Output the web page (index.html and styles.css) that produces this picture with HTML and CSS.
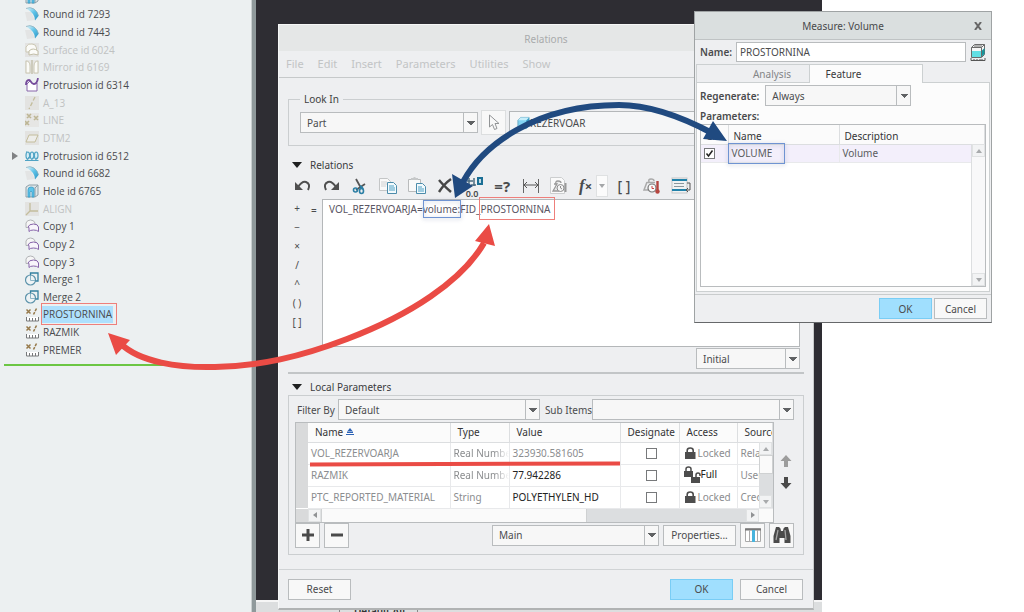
FILE: index.html
```html
<!DOCTYPE html>
<html lang="en">
<head>
<meta charset="utf-8">
<title>Relations</title>
<link rel="stylesheet" href="styles.css">
</head>
<body>
<svg class="sprite" aria-hidden="true">
  <defs>
    <linearGradient id="sky" x1="0" y1="0" x2="1" y2="1"><stop offset="0" stop-color="#e8f7fc"/><stop offset=".5" stop-color="#5fc3e8"/><stop offset="1" stop-color="#2a94c4"/></linearGradient>
  </defs>
  <symbol id="i-round" viewBox="0 0 14 14"><path d="M0 5h6l4 8-8 1z" fill="#e3e4e4"/><path d="M1 1.500Q5-.5 9 2q4 3 4.500 7L10 13.500Q10 6 1 1.500z" fill="url(#sky)"/><path d="M1 1.500Q5-.5 9 2q4 3 4.500 7" fill="none" stroke="#8fb0bd" stroke-width=".8"/></symbol>
  <symbol id="i-surface" viewBox="0 0 14 14"><rect width="14" height="14" fill="#e3e3e2"/><path d="M1 9V4Q3 0 7 1q4 0 4.500 4v3M1 9h4" fill="#fbfbf8" stroke="#cbc8b4"/><path d="M4 12V8q4-4 9 0v4q-4-2-9 0z" fill="#fbfbf8" stroke="#c3bfa8"/></symbol>
  <symbol id="i-mirror" viewBox="0 0 14 14"><rect width="14" height="14" fill="#e6e6e4"/><path d="M1 1q4 0 4 5v7H1zM13 1q-4 0-4 5v7h4z" fill="#fbfbf8" stroke="#c9c6b2"/><path d="M7 0v14" stroke="#bdb9a2" stroke-width="1.200"/></symbol>
  <symbol id="i-sweep" viewBox="0 0 14 14"><path d="M2 6v7h10V5l-4 1-3-3z" fill="#fff" stroke="#8764aa"/><path d="M1 7Q1 2 4 2c2 0 2 4 5 4q3 0 4-6" fill="none" stroke="#754b9b" stroke-width="1.800"/></symbol>
  <symbol id="i-axis" viewBox="0 0 14 14"><rect width="14" height="14" fill="#e3e3e1"/><path d="M10 1L4 13" stroke="#c3bd9c" stroke-width="1.300" stroke-dasharray="4 2"/></symbol>
  <symbol id="i-points" viewBox="0 0 14 14"><rect width="14" height="14" fill="#e6e6e4"/><path d="M2 1l4 4m0-4L2 5m7-2l4 4m0-4L9 7M0 8l4 4m0-4l-4 4" stroke="#bdb695" stroke-width="1.600"/></symbol>
  <symbol id="i-plane" viewBox="0 0 14 14"><rect width="14" height="14" fill="#e3e3e1"/><path d="M4 4h9l-3 7H1z" fill="#ededea" stroke="#c3bd9c"/></symbol>
  <symbol id="i-pattern" viewBox="0 0 14 14"><path d="M0 11.500h13.500M1 3h1" stroke="#4fa3c4" fill="none"/><g fill="#d8eef6" stroke="#4fa3c4" stroke-width="1.200"><ellipse cx="2.800" cy="6.500" rx="1.800" ry="3.500"/><ellipse cx="7" cy="6.500" rx="1.800" ry="3.500"/><ellipse cx="11.200" cy="6.500" rx="1.800" ry="3.500"/></g><path d="M2 11l2-3m2.500 3l2-3m2 3l2-3" stroke="#4fa3c4"/></symbol>
  <symbol id="i-hole" viewBox="0 0 14 14"><path d="M1 3l3-2h9v10l-3 2H1z" fill="#dfe6e9" stroke="#8fa0a8"/><path d="M10 3.500V13M10 4l3-3" stroke="#8fa0a8"/><path d="M3 13V6q0-3 3-3t3 2v8H7V8q-1-2-2 0v5z" fill="#5cc4ea" stroke="#3b9cc5" stroke-width=".8"/></symbol>
  <symbol id="i-csys" viewBox="0 0 14 14"><rect width="14" height="14" fill="#e3e3e1"/><path d="M5 1v8h8M5 9l-4 4" fill="none" stroke="#c3bd9c" stroke-width="1.300"/></symbol>
  <symbol id="i-copy" viewBox="0 0 14 14"><path d="M1 8.500V4Q2 1 5.500 1T10 4v1M1 8.500h2" fill="#f6f6f6" stroke="#b2b4b6"/><path d="M4 12.500V8.500L3 8q1-3 5.500-3t5 3v4.500q-1.500-1.500-5-1.500T4 12.500z" fill="#f8f5fb" stroke="#8764aa"/></symbol>
  <symbol id="i-merge" viewBox="0 0 14 14"><circle cx="5.500" cy="8" r="5" fill="#eef3f5" stroke="#5d93ab" stroke-width="1.200"/><path d="M5.500 3.500V1H13v8h-2.500" fill="none" stroke="#3480a0" stroke-width="1.300"/><path d="M5.500 4v4.500H10" fill="none" stroke="#8db5c6"/></symbol>
  <symbol id="i-measure" viewBox="0 0 14 14"><path d="M1.500 1.500l4 4m0-4l-4 4" stroke="#96794a" stroke-width="1.500"/><path d="M11.500.500l-3 6" stroke="#96794a" stroke-width="1.500" stroke-dasharray="3 1"/><path d="M1.500 9v4h12V9" fill="#fff" stroke="#77797b"/><path d="M4.500 13v-3m3 3v-3m3 3v-3" stroke="#77797b"/></symbol>
  <symbol id="i-lock" viewBox="0 0 12 12"><rect x="1" y="5" width="10.500" height="7" fill="#4d4d4d"/><path d="M3.200 6V3.500q0-2.500 3-2.500t3 2.500V6" fill="none" stroke="#4d4d4d" stroke-width="1.600"/></symbol>
  <symbol id="i-binoc" viewBox="0 0 18 18"><path d="M3 1h3q2 1 2 4h2q0-3 2-4h3l2.500 9v7h-6v-5h-5v5h-6v-7z" fill="#4b4b4b"/><path d="M5 4L3 14M12 4l1 10" stroke="#a5a5a5" stroke-width="1.300"/></symbol>
</svg>

<div class="app">
  <nav class="tree" aria-label="Model tree">
    <ul class="tree-list">
      <li class="node"><svg class="ic"><use href="#i-hole"/></svg></li>
      <li class="node"><svg class="ic"><use href="#i-round"/></svg>Round id 7293</li>
      <li class="node"><svg class="ic"><use href="#i-round"/></svg>Round id 7443</li>
      <li class="node off"><svg class="ic"><use href="#i-surface"/></svg>Surface id 6024</li>
      <li class="node off"><svg class="ic"><use href="#i-mirror"/></svg>Mirror id 6169</li>
      <li class="node"><svg class="ic"><use href="#i-sweep"/></svg>Protrusion id 6314</li>
      <li class="node off"><svg class="ic"><use href="#i-axis"/></svg>A_13</li>
      <li class="node off"><svg class="ic"><use href="#i-points"/></svg>LINE</li>
      <li class="node off"><svg class="ic"><use href="#i-plane"/></svg>DTM2</li>
      <li class="node parent"><svg class="ic"><use href="#i-pattern"/></svg>Protrusion id 6512</li>
      <li class="node"><svg class="ic"><use href="#i-round"/></svg>Round id 6682</li>
      <li class="node"><svg class="ic"><use href="#i-hole"/></svg>Hole id 6765</li>
      <li class="node off"><svg class="ic"><use href="#i-csys"/></svg>ALIGN</li>
      <li class="node"><svg class="ic"><use href="#i-copy"/></svg>Copy 1</li>
      <li class="node"><svg class="ic"><use href="#i-copy"/></svg>Copy 2</li>
      <li class="node"><svg class="ic"><use href="#i-copy"/></svg>Copy 3</li>
      <li class="node"><svg class="ic"><use href="#i-merge"/></svg>Merge 1</li>
      <li class="node"><svg class="ic"><use href="#i-merge"/></svg>Merge 2</li>
      <li class="node"><svg class="ic"><use href="#i-measure"/></svg><span class="picked">PROSTORNINA</span></li>
      <li class="node"><svg class="ic"><use href="#i-measure"/></svg>RAZMIK</li>
      <li class="node"><svg class="ic"><use href="#i-measure"/></svg>PREMER</li>
    </ul>
    <div class="insert-line"></div>
  </nav>

  <main class="canvas">
    <div class="viewport"></div>
    <div class="status"><span class="status-tools"></span><span class="status-tab">Default All</span></div>
  </main>
</div>

<section class="window relations" aria-label="Relations">
  <header class="title title-off">Relations</header>
  <div class="menubar">
    <button class="menu">File</button><button class="menu">Edit</button><button class="menu">Insert</button><button class="menu">Parameters</button><button class="menu">Utilities</button><button class="menu">Show</button>
  </div>
  <div class="body">
    <fieldset class="lookin">
      <legend>Look In</legend>
      <div class="lookin-row">
        <span class="select s-part"><select aria-label="Look in"><option>Part</option></select></span>
        <button class="pick" aria-label="Select"><svg width="12" height="17" viewBox="0 0 12 17"><path d="M1.500 1v12l3-2.500 2 5 2.500-1-2-5h4z" fill="#f8f8f8" stroke="#929496"/></svg></button>
        <label class="model"><svg width="13" height="14" viewBox="0 0 14 14"><path d="M1 4l3-3h9v9l-3 3H1z" fill="#82d3f2" stroke="#68a9c2"/><path d="M10 4v9l3-3V1z" fill="#369dc6"/><path d="M1 4l3-3h9l-3 3z" fill="#c5eefb"/></svg><input type="text" value="REZERVOAR" aria-label="Model"></label>
      </div>
    </fieldset>

    <h2 class="section">Relations</h2>
    <div class="toolbar">
      <button aria-label="Undo"><svg width="18" height="14" viewBox="0 0 18 14"><path d="M4 8Q8 2 12 3q5 2 2 8" fill="none" stroke="#4f4f4f" stroke-width="2"/><path d="M1 3v8h8z" fill="#4f4f4f"/></svg></button>
      <button aria-label="Redo"><svg width="18" height="14" viewBox="0 0 18 14"><path d="M14 8Q10 2 6 3q-5 2-2 8" fill="none" stroke="#4f4f4f" stroke-width="2"/><path d="M17 3v8H9z" fill="#4f4f4f"/></svg></button>
      <button aria-label="Cut"><svg width="16" height="18" viewBox="0 0 16 18"><path d="M4 2l5 9M13 7l-9 6" stroke="#555" stroke-width="1.800"/><path d="M8 9q2 1 3 3" stroke="#2c7fa5" stroke-width="2"/><circle cx="3.500" cy="13" r="2" fill="none" stroke="#2c7fa5" stroke-width="1.600"/><ellipse cx="9.500" cy="14" rx="2" ry="2.500" fill="none" stroke="#2c7fa5" stroke-width="1.600"/></svg></button>
      <button aria-label="Copy"><svg width="20" height="20" viewBox="0 0 20 20"><path d="M1.500 2.500h8l3 3v9h-11z" fill="#f9f9f9" stroke="#c4c6c7"/><path d="M3 6h6M3 8h6M3 10h5" stroke="#d0d2d3"/><path d="M9.500 6.500h6l3 3v8h-9z" fill="#f2fafd" stroke="#4c8cab"/><path d="M11 10h5M11 12h6M11 14h6" stroke="#4c9fc4"/></svg></button>
      <button aria-label="Paste"><svg width="20" height="20" viewBox="0 0 20 20"><path d="M1.500 3.500h12v12h-12z" fill="#f9f9f9" stroke="#b9bbbc"/><path d="M4 4V2h2q1.500-2 3 0h2v2z" fill="#c6c8c9"/><path d="M9.500 7.500h6l3 3v7h-9z" fill="#f2fafd" stroke="#4c8cab"/><path d="M11 11h4M11 13h6M11 15h6" stroke="#4c9fc4"/></svg></button>
      <button aria-label="Delete"><svg width="16" height="16" viewBox="0 0 16 16"><path d="M2 2q4 5 12 12M14 1Q7 6 2 14" fill="none" stroke="#474747" stroke-width="2.400"/></svg></button>
      <button aria-label="Units" class="units"><svg width="20" height="20" viewBox="0 0 20 20"><path d="M3 5h6M5 2v8M10 2v8M7 9h5" stroke="#4b6c80" stroke-width="1.500"/><rect x="13" y="1" width="6" height="8" fill="#1b6f95"/><path d="M16 3v4" stroke="#fff" stroke-width="1.500"/></svg><span>0.0</span></button>
      <button aria-label="Evaluate" class="glyph">=?</button>
      <button aria-label="Dimension"><svg width="18" height="14" viewBox="0 0 18 14"><path d="M1.500 0v14M16.500 0v14" stroke="#666"/><path d="M2 6h14M5 3L2 6l3 3M13 3l3 3-3 3" fill="none" stroke="#555"/></svg></button>
      <button aria-label="Mass"><svg width="20" height="20" viewBox="0 0 20 20"><path d="M1.500 1.500h11l3 3v13h-14z" fill="#fafafa" stroke="#cccecf"/><path d="M7 8q-1-3 2-3t3 2M5 8h3L4 15h6" fill="#e9eaea" stroke="#999" stroke-width="1.300"/><circle cx="11.500" cy="12" r="3.500" fill="#f5f5f5" stroke="#8c8c8c"/><path d="M11.500 10v2l1.500 1" fill="none" stroke="#8c8c8c"/><path d="M16.500 7v9" stroke="#999" stroke-width="2"/></svg></button>
      <span class="fx"><button aria-label="Function"><i>f</i><b>×</b></button><button class="drop" aria-label="Functions"></button></span>
      <button aria-label="Brackets" class="glyph brackets">[ ]</button>
      <button aria-label="Thermal"><svg width="20" height="20" viewBox="0 0 20 20"><path d="M7 6q-1-3 2-3t3 2M5 6.500h8M5 6l-3 8h5" fill="none" stroke="#aaa" stroke-width="1.500"/><circle cx="10" cy="12" r="4" fill="#fafafa" stroke="#777" stroke-width="1.200"/><path d="M10 10v2.500h2" fill="none" stroke="#c44" /><path d="M15.500 5v11" stroke="#b5453f" stroke-width="2.400"/><circle cx="15.500" cy="15.500" r="2.200" fill="#b5453f"/></svg></button>
      <button aria-label="Sort"><svg width="20" height="18" viewBox="0 0 20 18"><rect x="1" y="1" width="15" height="15" fill="#f0f2f3" stroke="#c4c6c7"/><path d="M1 3h15M1 13h15" stroke="#2182aa" stroke-width="2"/><path d="M3 6.500h10M3 9.500h10" stroke="#8a979d"/><path d="M16 6h3v7h-3M17 11l-2 2 2 2" fill="none" stroke="#555"/></svg></button>
    </div>

    <div class="editor">
      <div class="ops"><button>+</button><button>−</button><button>×</button><button>/</button><button>^</button><button>( )</button><button>[ ]</button></div>
      <span class="eq">=</span>
      <textarea aria-label="Relations text" spellcheck="false">VOL_REZERVOARJA=volume:FID_PROSTORNINA</textarea>
    </div>
    <div class="initial-row"><span class="select s-initial"><select aria-label="Stage"><option>Initial</option></select></span></div>
    <hr class="rule">

    <h2 class="section">Local Parameters</h2>
    <div class="params">
      <div class="filter">
        <label for="filter">Filter By</label><span class="select"><select id="filter"><option>Default</option></select></span>
        <label for="sub" class="sub">Sub Items</label><span class="select"><select id="sub"><option></option></select></span>
      </div>
      <div class="grid-row">
        <div class="grid">
          <table class="ptable">
            <colgroup><col class="c-h"><col class="c-name"><col class="c-type"><col class="c-value"><col class="c-des"><col class="c-acc"><col></colgroup>
            <thead><tr><th class="rowhead"></th><th>Name <svg width="8" height="8" viewBox="0 0 8 8"><path d="M4 0l2.500 3H1.500zM1 3.500h6V5H1zM0 6h8v1H0z" fill="#2c62b5"/></svg></th><th>Type</th><th>Value</th><th>Designate</th><th>Access</th><th>Source</th></tr></thead>
            <tbody>
              <tr><td class="rowhead"></td><td>VOL_REZERVOARJA</td><td class="fade">Real Number</td><td>323930.581605</td><td class="mid"><input type="checkbox" aria-label="Designate VOL_REZERVOARJA"></td><td class="acc"><svg width="12" height="12"><use href="#i-lock"/></svg>Locked</td><td>Relation</td></tr>
              <tr><td class="rowhead"></td><td>RAZMIK</td><td class="fade">Real Number</td><td class="dark">77.942286</td><td class="mid"><input type="checkbox" aria-label="Designate RAZMIK"></td><td class="acc both dark"><svg width="18" height="18" viewBox="0 0 18 18"><path d="M1 5h9v6H1zM8 11h9v6H8z" fill="#4d4d4d"/><path d="M3 5V3q0-2 2.500-2T8 3v2M13 11V9q0-2 2-2t2 2v1" fill="none" stroke="#4d4d4d" stroke-width="1.500"/></svg>Full</td><td>User-D</td></tr>
              <tr><td class="rowhead"></td><td>PTC_REPORTED_MATERIAL</td><td>String</td><td class="dark">POLYETHYLEN_HD</td><td class="mid"><input type="checkbox" aria-label="Designate PTC_REPORTED_MATERIAL"></td><td class="acc"><svg width="12" height="12"><use href="#i-lock"/></svg>Locked</td><td>Creo P</td></tr>
            </tbody>
          </table>
          <div class="vbar"><span class="bt up"></span><span class="thumb"></span><span class="bt down"></span></div>
          <div class="hbar"><span class="corner"></span><span class="bt left"></span><span class="thumb"></span><span class="track"></span><span class="bt right"></span><span class="end"></span></div>
        </div>
        <div class="movers">
          <button aria-label="Move up"><svg width="12" height="13" viewBox="0 0 12 13"><path d="M6 0l5.500 6H8v6H4V6H.5z" fill="#9c9c9c"/></svg></button>
          <button aria-label="Move down"><svg width="12" height="13" viewBox="0 0 12 13"><path d="M6 12L.5 6H4V0h4v6h3.500z" fill="#4a4a4a"/></svg></button>
        </div>
      </div>
      <div class="actions">
        <button class="btn sq" aria-label="Add"><svg width="14" height="14" viewBox="0 0 14 14"><path d="M7 1v12M1 7h12" stroke="#4a4a4a" stroke-width="3"/></svg></button>
        <button class="btn sq" aria-label="Remove"><svg width="14" height="14" viewBox="0 0 14 14"><path d="M1 7h12" stroke="#4a4a4a" stroke-width="3"/></svg></button>
        <span class="select s-main"><select aria-label="Parameter set"><option>Main</option></select></span>
        <button class="btn props">Properties...</button>
        <button class="btn sq" aria-label="Columns"><svg width="16" height="14" viewBox="0 0 16 14"><path d="M.5.500h15v13H.5z" fill="#fff" stroke="#aaa"/><path d="M0 1.500h16" stroke="#777" stroke-width="2"/><path d="M4.500 2v12M12.500 2v12" stroke="#aaa"/><path d="M7 2h3v12H7z" fill="#48b4dd"/></svg></button>
        <button class="btn sq" aria-label="Find"><svg width="18" height="18"><use href="#i-binoc"/></svg></button>
      </div>
    </div>
  </div>
  <footer class="foot"><button class="btn">Reset</button><button class="btn ok push">OK</button><button class="btn">Cancel</button></footer>
</section>

<section class="window measure" aria-label="Measure: Volume">
  <header class="title"><span>Measure: Volume</span><button class="close" aria-label="Close"><svg width="8" height="8" viewBox="0 0 8 8"><path d="M1 0l6 8M7 0L1 8" stroke="#666" stroke-width="2"/></svg></button></header>
  <div class="name-row"><label for="mname">Name:</label><input id="mname" type="text" value="PROSTORNINA"><svg width="16" height="18" viewBox="0 0 16 18"><path d="M1.500 4.500l3-3h10v10l-3 3h-10z" fill="#f7f7f7" stroke="#6b6b6b"/><path d="M2 8h9v6H2z" fill="#62dfe4"/><path d="M11.500 8v6l3-3V5z" fill="#17969d"/><path d="M1.500 4.500h10l3-3M11.500 4.500V14M4 3h8" fill="none" stroke="#6b6b6b"/><path d="M1 15v2.500h14V15M4 17v-1m3 1v-1m3 1v-1m2 1v-1" fill="none" stroke="#555"/></svg></div>
  <div class="tabs" role="tablist"><button role="tab" class="tab">Analysis</button><button role="tab" class="tab on">Feature</button><span class="tab-rest"></span></div>
  <div class="mpanel">
    <div class="regen"><label for="regen">Regenerate:</label><span class="select s-regen"><select id="regen"><option>Always</option></select></span></div>
    <div class="plabel">Parameters:</div>
    <div class="mgrid">
      <table class="mtable">
        <colgroup><col class="m-sh"><col class="m-name"><col></colgroup>
        <thead><tr><th>Cr...</th><th>Name</th><th>Description</th></tr></thead>
        <tbody><tr><td><input type="checkbox" class="checked" checked aria-label="Create VOLUME"></td><td>VOLUME</td><td>Volume</td></tr></tbody>
      </table>
      <div class="mbar"><span class="bt up"></span><span class="track"></span><span class="bt down"></span></div>
    </div>
  </div>
  <footer class="mfoot"><button class="btn ok">OK</button><button class="btn">Cancel</button></footer>
</section>

<svg class="marks" width="1024" height="612" viewBox="0 0 1024 612" aria-hidden="true">
  <g fill="none" stroke="#ee7f7b"><rect x="41.500" y="303.500" width="75" height="21"/><rect x="479.500" y="197.500" width="75" height="22"/></g>
  <g fill="none" stroke="#6f93d2" class="glow"><rect x="423.500" y="200.500" width="37" height="17"/><rect x="728.500" y="143.500" width="56" height="20"/></g>
  <path d="M310 464.500L620 463.500" stroke="#ea4b45" stroke-width="4"/>
  <path d="M121 344C140 362 178 368 215 367C260 366 300 357 347 339C410 315 462 281 484 243" fill="none" stroke="#ea4b45" stroke-width="6"/>
  <path d="M108 333l22 7-14 15zM489 224l6 22-20-5z" fill="#ea4b45"/>
  <path d="M463 182C482 146 535 105 619 105C650 105 680 116 712 133" fill="none" stroke="#204a80" stroke-width="6"/>
  <path d="M455 198l-3-24 21 12zM727 141l-14-20-10 18z" fill="#204a80"/>
</svg>
</body>
</html>
```
FILE: styles.css
```css
* { box-sizing: border-box; }
body {
  margin: 0;
  position: relative;
  min-height: 100vh;
  overflow: hidden;
  background: #fff;
  color: #4a4b4d;
  font: 10px/14px "Noto Sans", "Open Sans", sans-serif;
}
button, input, select, textarea { font: inherit; color: inherit; margin: 0; padding: 0; border: 0; background: none; border-radius: 0; outline: 0; }
button { text-align: center; }
.sprite { position: absolute; width: 0; height: 0; }
svg { flex: none; }

.app { display: flex; height: 100vh; min-height: 612px; }

/* model tree */
.tree { flex: 0 0 256px; background: #ecf0f1; border-right: 4px solid #8f999b; box-shadow: inset -1px 0 #c9cfd0; overflow: hidden; font-family: "Open Sans", "Noto Sans", sans-serif; }
.tree-list { list-style: none; margin: -12px 0 0; padding: 0; height: 371px; display: grid; grid-auto-rows: 1fr; }
.node { display: flex; align-items: center; gap: 4px; padding-left: 25px; }
.node .ic { width: 14px; height: 14px; }
.node.off { color: #c0c2c2; }
.node.parent { padding-left: 12px; }
.node.parent::before { content: ""; width: 0; height: 0; margin-right: 3px; border: 4px solid transparent; border-left: 6px solid #808284; border-right: 0; }
.picked { background: #aee0fd; margin-left: -1px; padding: 1px 1px 2px 1px; }
.insert-line { height: 2px; margin: 5px 0 0 4px; background: #6cc644; }

/* graphics area */
.canvas { display: flex; flex-direction: column; width: 566px; }
.viewport { flex: 1; background: #2e2d33; }
.status { flex: 0 0 12px; display: flex; gap: 8px; background: #dcdedf; border-top: 2px solid #f6f6f6; overflow: hidden; padding-left: 4px; }
.status-tools { width: 80px; border-right: 1px solid #888; }
.status-tab { padding: 2px 12px 0 6px; border-right: 1px solid #888; font-weight: 600; color: #333; }

/* floating windows */
.window { position: absolute; background: #eeeff1; display: flex; flex-direction: column; }
.relations { left: 278px; top: 24px; width: 536px; border: 1px solid #f6f7f7; border-right-color: #c8caca; border-bottom: 2px solid #b0b2b3; }
.measure { left: 694px; top: 11px; width: 298px; border: 1px solid #9fa3a4; border-bottom-color: #66686a; }
.title { display: flex; align-items: center; justify-content: center; height: 26px; position: relative; background: #dadfdf; color: #48494b; }
.title-off { background: #e5e7e7; color: #a9abac; padding-top: 2px; }
.measure .title { height: 28px; border-bottom: 1px solid #bfc3c4; }
.close { position: absolute; right: 9px; }

.menubar { display: flex; gap: 14px; height: 27px; padding: 0 7px; border-bottom: 1px solid #c6c9ca; font-size: 11px; color: #c2c4c5; }
.body { padding: 0 9px; }
.lookin { margin: 14px 0 0; padding: 4px 8px 10px 11px; border: 1px solid #cbced0; min-width: 0; }
.lookin legend { padding: 0 4px; color: #3e3f41; }
.lookin-row { display: flex; gap: 3px; align-items: center; }
.pick { width: 25px; height: 25px; border: 1px solid #dcdedf; background: #f8f8f8; display: grid; place-items: center; }
.model { flex: 1; display: flex; align-items: center; height: 23px; padding-left: 7px; border: 1px solid #b4b7b9; background: #f5f6f7; }
.model input { flex: 1; min-width: 0; }

.select { display: grid; height: 21px; }
.select select { grid-area: 1 / 1; appearance: none; width: 100%; padding: 0 20px 0 6px; border: 1px solid #b9bcbe; background: #f7f7f7; }
.select::after { content: ""; grid-area: 1 / 1; justify-self: end; width: 14px; pointer-events: none; border-left: 1px solid #b9bcbe; margin: 1px 0;
  background: conic-gradient(from -45deg at 50% 100%, #606264 25%, transparent 0) center / 8px 4px no-repeat; }
.s-part { width: 178px; }
.s-initial { width: 104px; }

.section { display: flex; align-items: center; gap: 8px; height: 16px; margin: 11px 0 0; padding-left: 4px; font: inherit; color: #3b3c3e; }
.section::before { content: ""; border: 5px solid transparent; border-top: 6px solid #1e1f20; border-bottom: 0; }

.toolbar { display: flex; justify-content: space-between; align-items: center; height: 24px; margin: 1px 0 1px 3px; width: 402px; max-width: 100%; }
.toolbar button { width: 24px; height: 22px; display: grid; place-items: center; }
.toolbar .glyph { font-size: 15px; font-weight: 700; }
.toolbar .brackets { font-size: 14px; font-weight: 500; white-space: nowrap; }
.toolbar .units { position: relative; }
.units span { position: absolute; left: 4px; bottom: -2px; font-size: 9px; font-weight: 600; line-height: 10px; }
.fx { display: flex; }
.fx button:first-child { display: flex; align-items: center; justify-content: center; width: 20px; }
.fx i { font: italic 700 17px/20px "Liberation Serif", serif; }
.fx b { font-size: 13px; }
.toolbar .drop { width: 12px; background: #fbfbfb; border: 1px solid #dfe1e2; }
.drop::after { content: ""; border: 3px solid transparent; border-top: 4px solid #a4a6a8; border-bottom: 0; }

.editor { display: grid; grid-template-columns: 18px 16px 1fr; margin-right: 4px; height: 148px; }
.ops { display: flex; flex-direction: column; gap: 5px; padding-top: 2px; }
.ops button { height: 14px; line-height: 14px; white-space: nowrap; }
.eq { padding: 4px 0 0 5px; }
.editor textarea { resize: none; border: 1px solid #b4b7b9; background: #fff; padding: 2px 6px; overflow: hidden; color: #5a5664; }
.initial-row { display: flex; justify-content: flex-end; margin: 1px 4px 0 0; }
.rule { margin: 3px 0 0; border: 0; border-top: 2px solid #c2c5c7; }
.rule + .section { margin-top: 5px; }

.params { border: 1px solid #cbced0; padding: 3px 9px 6px 6px; }
.filter { display: flex; align-items: center; }
.filter label { margin-right: 3px; margin-left: 2px; white-space: nowrap; }
.filter .sub { margin: 0 0 0 5px; }
.filter .select { flex: 1; }
.grid-row { display: flex; margin-top: 2px; }
.grid { flex: 1; min-width: 0; position: relative; border: 1px solid #b9bcbe; background: #fff; }
table { border-collapse: collapse; table-layout: fixed; width: 100%; }
.c-h { width: 12px; } .c-name { width: 142px; } .c-type { width: 59px; } .c-value { width: 111px; } .c-des { width: 59px; } .c-acc { width: 58px; }
th { font-weight: 400; color: #333436; text-align: left; padding: 0 0 0 7px; height: 19px; background: #fbfbfb; border-right: 1px solid #dcdee0; border-bottom: 1px solid #dcdee0; white-space: nowrap; overflow: hidden; }
td { padding: 0 0 0 3px; height: 22px; white-space: nowrap; overflow: hidden; color: #8b8d8f; border-right: 1px solid #e8e9eb; border-bottom: 1px solid #e8e9eb; }
.rowhead { padding: 0; background: #d9dadb; border: 0; }
td.dark { color: #222; }
td.mid { text-align: center; }
.fade { mask-image: linear-gradient(90deg, #000 75%, transparent); }
.acc svg { vertical-align: -2px; margin: 0 2px 0 1px; }
.acc.both svg { vertical-align: middle; margin: 0; }
td input { appearance: none; width: 11px; height: 11px; border: 1px solid #77797b; background: #fff; vertical-align: -2px; }
.hbar { display: flex; height: 13px; background: #fafafa; }
.hbar .corner { width: 12px; background: #d9dadb; }
.hbar .thumb { flex: 265; border: 1px solid #cfd1d2; border-width: 0 1px; background: #fafafa; }
.hbar .track { flex: 160; background: #dcdee0; }
.hbar .end { width: 14px; }
.vbar { position: absolute; right: 0; top: 19px; width: 14px; height: 66px; display: flex; flex-direction: column; justify-content: flex-start; background: #dcdee0; }
.vbar .thumb { height: 19px; background: #fafafa; border: 1px solid #cfd1d2; }
.vbar .down { margin-top: auto; }
.bt { flex: none; width: 13px; height: 13px; display: grid; place-items: center; background: #f2f3f4; border: 1px solid #e0e2e3; }
.bt::after { content: ""; border: 3px solid transparent; }
.bt.up::after { border-bottom: 4px solid #a8aaac; border-top: 0; }
.bt.down::after { border-top: 4px solid #a8aaac; border-bottom: 0; }
.bt.left::after { border-right: 4px solid #909294; border-left: 0; }
.bt.right::after { border-left: 4px solid #909294; border-right: 0; }
.movers { display: flex; flex-direction: column; justify-content: center; gap: 9px; width: 20px; padding-left: 3px; }
.movers button { height: 13px; display: grid; place-items: center; }

.btn { height: 21px; min-width: 63px; border: 1px solid #b9bcbe; background: #f8f8f8; }
.btn.ok { background: #a0dffe; border-color: #79cdf5; }
.btn.sq { width: 25px; min-width: 25px; height: 25px; display: grid; place-items: center; }
.actions { display: flex; align-items: center; gap: 4px; }
.s-main { width: 167px; margin-left: auto; }
.props { min-width: 73px; }
.foot { display: flex; gap: 7px; margin-top: 14px; padding: 9px 10px 8px 9px; border-top: 1px solid #d0d3d5; }
.push { margin-left: auto; }

/* measure window */
.name-row { display: flex; align-items: center; gap: 4px; height: 24px; padding: 0 5px; }
.name-row input { flex: 1; min-width: 0; height: 20px; padding-left: 3px; border: 1px solid #b9bcbe; background: #fff; }
.name-row label, .regen label, .plabel { font-weight: 600; }
.tabs { display: flex; height: 19px; margin: 0 1px; }
.tab { flex: 0 0 114px; padding-left: 38px; border: 1px solid #ccd0d1; color: #838587; }
.tab.on { flex-basis: 113px; padding: 0 45px 0 0; border-width: 1px 1px 0 0; background: #fcfcfc; color: #38393b; }
.tab-rest { flex: 1; border-bottom: 1px solid #ccd0d1; }
.mpanel { margin: 0 1px; padding: 2px 3px 4px; background: #fcfcfc; border: 1px solid #ccd0d1; border-top: 0; }
.regen { display: flex; align-items: center; gap: 6px; }
.s-regen { width: 146px; }
.plabel { height: 18px; padding-top: 3px; }
.mgrid { position: relative; height: 163px; border: 1px solid #b9bcbe; background: #fff; }
.m-sh { width: 27px; } .m-name { width: 111px; }
.mtable th { height: 19px; padding: 3px 0 0 5px; }
.mtable td { height: 18px; padding-left: 3px; background: #f3effb; color: #5a5c5e; }
td input.checked { background: #fff url("data:image/svg+xml,%3Csvg xmlns='http://www.w3.org/2000/svg' viewBox='0 0 9 9'%3E%3Cpath d='M1.500 4.500l2 2.500L7.500 1.500' fill='none' stroke='%23222' stroke-width='1.500'/%3E%3C/svg%3E") center / 9px 9px no-repeat; }
.mbar { position: absolute; right: 0; top: 19px; bottom: 0; display: flex; flex-direction: column; background: #f8f8f9; border-left: 1px solid #dcdee0; }
.mbar .track { flex: 1; }
.mfoot { display: flex; justify-content: flex-end; gap: 2px; margin-top: 2px; padding: 3px 4px 3px; border-top: 1px solid #c9cccd; }
.mfoot .btn { min-width: 53px; }

.marks { position: absolute; left: 0; top: 0; pointer-events: none; }
.glow { filter: drop-shadow(0 1px 2px rgb(60 80 130 / 40%)); }
```
